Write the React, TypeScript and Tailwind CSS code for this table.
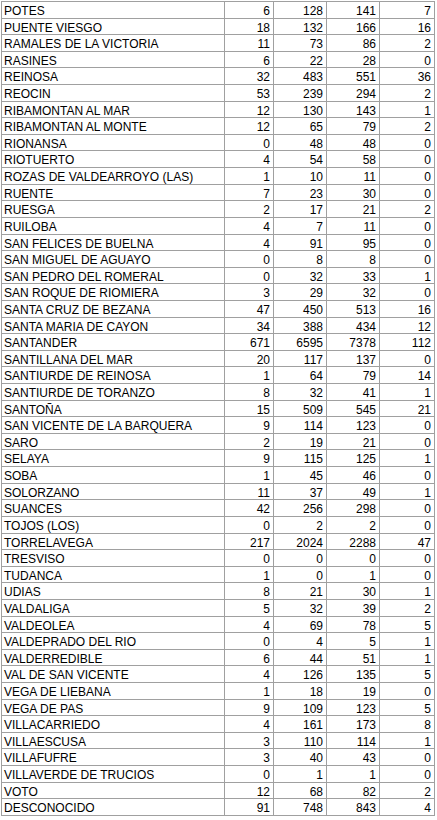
import React from "react";

const rows: [string, number, number, number, number][] = [
  ["POTES", 6, 128, 141, 7],
  ["PUENTE VIESGO", 18, 132, 166, 16],
  ["RAMALES DE LA VICTORIA", 11, 73, 86, 2],
  ["RASINES", 6, 22, 28, 0],
  ["REINOSA", 32, 483, 551, 36],
  ["REOCIN", 53, 239, 294, 2],
  ["RIBAMONTAN AL MAR", 12, 130, 143, 1],
  ["RIBAMONTAN AL MONTE", 12, 65, 79, 2],
  ["RIONANSA", 0, 48, 48, 0],
  ["RIOTUERTO", 4, 54, 58, 0],
  ["ROZAS DE VALDEARROYO (LAS)", 1, 10, 11, 0],
  ["RUENTE", 7, 23, 30, 0],
  ["RUESGA", 2, 17, 21, 2],
  ["RUILOBA", 4, 7, 11, 0],
  ["SAN FELICES DE BUELNA", 4, 91, 95, 0],
  ["SAN MIGUEL DE AGUAYO", 0, 8, 8, 0],
  ["SAN PEDRO DEL ROMERAL", 0, 32, 33, 1],
  ["SAN ROQUE DE RIOMIERA", 3, 29, 32, 0],
  ["SANTA CRUZ DE BEZANA", 47, 450, 513, 16],
  ["SANTA MARIA DE CAYON", 34, 388, 434, 12],
  ["SANTANDER", 671, 6595, 7378, 112],
  ["SANTILLANA DEL MAR", 20, 117, 137, 0],
  ["SANTIURDE DE REINOSA", 1, 64, 79, 14],
  ["SANTIURDE DE TORANZO", 8, 32, 41, 1],
  ["SANTOÑA", 15, 509, 545, 21],
  ["SAN VICENTE DE LA BARQUERA", 9, 114, 123, 0],
  ["SARO", 2, 19, 21, 0],
  ["SELAYA", 9, 115, 125, 1],
  ["SOBA", 1, 45, 46, 0],
  ["SOLORZANO", 11, 37, 49, 1],
  ["SUANCES", 42, 256, 298, 0],
  ["TOJOS (LOS)", 0, 2, 2, 0],
  ["TORRELAVEGA", 217, 2024, 2288, 47],
  ["TRESVISO", 0, 0, 0, 0],
  ["TUDANCA", 1, 0, 1, 0],
  ["UDIAS", 8, 21, 30, 1],
  ["VALDALIGA", 5, 32, 39, 2],
  ["VALDEOLEA", 4, 69, 78, 5],
  ["VALDEPRADO DEL RIO", 0, 4, 5, 1],
  ["VALDERREDIBLE", 6, 44, 51, 1],
  ["VAL DE SAN VICENTE", 4, 126, 135, 5],
  ["VEGA DE LIEBANA", 1, 18, 19, 0],
  ["VEGA DE PAS", 9, 109, 123, 5],
  ["VILLACARRIEDO", 4, 161, 173, 8],
  ["VILLAESCUSA", 3, 110, 114, 1],
  ["VILLAFUFRE", 3, 40, 43, 0],
  ["VILLAVERDE DE TRUCIOS", 0, 1, 1, 0],
  ["VOTO", 12, 68, 82, 2],
  ["DESCONOCIDO", 91, 748, 843, 4],
];

const numCell =
  "border-r border-[#a0a0a0] pr-[3px] pt-[2px] leading-[14px] text-right";

export default function App() {
  return (
    <div className="w-[437px] h-[820px] bg-white overflow-hidden pt-px pl-px">
      <div
        className="w-[434px] border-l border-t border-[#a0a0a0] text-black text-[12px]"
        style={{ fontFamily: '"Liberation Sans", Arial, sans-serif' }}
      >
        {rows.map((r) => (
          <div
            key={r[0]}
            className="grid grid-cols-[223px_49px_53px_53px_55px] h-[16.61px] border-b border-[#a0a0a0]"
          >
            <div className="border-r border-[#a0a0a0] pl-[2px] pt-[2px] leading-[14px] whitespace-nowrap overflow-hidden">
              {r[0]}
            </div>
            <div className={numCell}>{r[1]}</div>
            <div className={numCell}>{r[2]}</div>
            <div className={numCell}>{r[3]}</div>
            <div className={numCell}>{r[4]}</div>
          </div>
        ))}
      </div>
    </div>
  );
}
